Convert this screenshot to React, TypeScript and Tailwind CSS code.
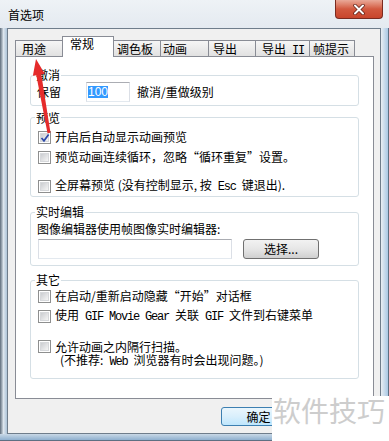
import React from 'react';

const cjk = "font-['Noto_Sans_CJK_SC',sans-serif]";
const mono = "font-['Liberation_Mono',monospace] text-[12px] tracking-[-1.2px]";

function CheckBox({ checked }: { checked?: boolean }) {
  return (
    <span className="w-[13px] h-[13px] shrink-0 border border-[#8e8f8f] bg-white p-[1px] flex relative">
      <span className="flex-1 bg-gradient-to-br from-[#cbcdd1] to-[#f5f5f5] border border-[#d6d8db]" />
      {checked && (
        <svg className="absolute left-[1px] top-[1px]" width="10" height="10" viewBox="0 0 10 10">
          <path d="M1.5 5 L4 7.8 L8.6 1.6" fill="none" stroke="#2b48a8" strokeWidth="1.7" />
        </svg>
      )}
    </span>
  );
}

function CheckRow({ checked, children, className = '' }: { checked?: boolean; children: React.ReactNode; className?: string }) {
  return (
    <div className={`flex items-center gap-[4px] h-[20px] pl-[7px] ${className}`}>
      <CheckBox checked={checked} />
      <span className="leading-[14px] whitespace-nowrap">{children}</span>
    </div>
  );
}

function Group({ title, labelClass, className = '', children }: { title: string; labelClass: string; className?: string; children: React.ReactNode }) {
  return (
    <div className={`border border-[#d5dfe5] rounded-[3px] ${className}`}>
      <div className={`w-fit bg-white ml-[4px] px-[1px] ${labelClass}`}>{title}</div>
      {children}
    </div>
  );
}

const tabs = [
  { label: '用途', w: 'w-[48px]', pl: 'pl-[6px]' },
  { label: '常规', w: 'w-[52px]', pl: 'pl-[7px]', active: true },
  { label: '调色板', w: 'w-[48px]', pl: 'pl-[3px]' },
  { label: '动画', w: 'w-[49px]', pl: 'pl-[2px]' },
  { label: '导出', w: 'w-[48px]', pl: 'pl-[4px]' },
  { label: '导出 II', w: 'w-[55px]', pl: 'pl-[6px]' },
  { label: '帧提示', w: 'w-[46px]', pl: 'pl-[3px]' },
];

export default function App() {
  return (
    <div className={`w-[389px] h-[441px] relative overflow-hidden bg-[#dfe7ef] text-[12px] text-black ${cjk}`}>
      <div className="flex flex-col h-full">
        {/* title bar */}
        <div className="h-[28px] flex items-start bg-gradient-to-b from-[#eef2f6] to-[#e4eaf0]">
          <div className="pl-[8px] pt-[7px] leading-[16px]">首选项</div>
          <div className="ml-auto mr-[6px] w-[48px] h-[19px] rounded-b-[4px] border border-t-0 border-[#7a2b20] bg-gradient-to-b from-[#e9a998] via-[#d2593f] to-[#c8452c] flex items-center justify-center">
            <svg width="12" height="11" viewBox="0 0 12 11">
              <path d="M2 1.5 L10 9.5 M10 1.5 L2 9.5" stroke="#5a1b12" strokeWidth="3.4" strokeLinecap="round" />
              <path d="M2 1.5 L10 9.5 M10 1.5 L2 9.5" stroke="#ffffff" strokeWidth="2" strokeLinecap="round" />
            </svg>
          </div>
        </div>

        <div className="flex flex-1">
          <div className="w-[7px] bg-gradient-to-r from-[#5f6d7b] via-[#dde6ee] to-[#aec4d8]" />
          {/* client */}
          <div className="w-[374px] border border-[#6f7d8b] bg-[#f0f0f0] flex flex-col">
            <div className="ml-[7px] mt-[7px] h-[20px] flex items-end">
              {tabs.map((t, i) => (
                <div
                  key={t.label}
                  className={`${t.w} ${t.pl} ${i > 0 ? '-ml-[1px]' : ''} border-t border-x border-[#898c95] whitespace-nowrap ${
                    t.active ? 'h-[21px] -mb-[1px] relative z-10 bg-white leading-[14px]' : 'h-[16px] pt-[1px] leading-[14px] bg-gradient-to-b from-[#f6f6f6] to-[#e1e1e1]'
                  }`}
                >
                  {t.label === '导出 II' ? (
                    <>
                      导出<span className={mono}> II</span>
                    </>
                  ) : (
                    t.label
                  )}
                </div>
              ))}
            </div>

            {/* panel */}
            <div className="ml-[7px] w-[359px] h-[343px] border border-[#898c95] bg-white flex flex-col px-[14px]">
              <Group title="撤消" labelClass="-mt-[8px] leading-[14px]" className="mt-[18px] pb-[3px]">
                <div className="flex items-center h-[20px] pl-[6px]">
                  <span className="leading-[14px]">保留</span>
                  <div className="ml-[25px] w-[44px] h-[20px] border border-[#abadb3] border-b-[#e3e9ef] border-x-[#dbdfe6] bg-white flex items-center pl-[1px]">
                    <span className="bg-[#3399ff] text-white leading-[12px] font-['Liberation_Sans',sans-serif] text-[12px]">100</span>
                  </div>
                  <span className="ml-[7px] leading-[14px]">撤消/重做级别</span>
                </div>
              </Group>

              <Group title="预览" labelClass="-mt-[7px] leading-[14px]" className="mt-[11px]">
                <CheckRow checked className="mt-[2px]">开启后自动显示动画预览</CheckRow>
                <CheckRow>预览动画连续循环，忽略“循环重复”设置。</CheckRow>
                <CheckRow className="mt-[9px]">
                  全屏幕预览 (没有控制显示, 按<span className={mono}> Esc </span>键退出).
                </CheckRow>
              </Group>

              <Group title="实时编辑" labelClass="-mt-[8px] leading-[14px]" className="mt-[15px] pb-[6px]">
                <div className="mt-[2px] pl-[6px] leading-[16px]">图像编辑器使用帧图像实时编辑器:</div>
                <div className="mt-[2px] pl-[7px] flex items-center">
                  <div className="w-[194px] h-[20px] border border-[#abadb3] border-b-[#e3e9ef] border-x-[#dbdfe6] bg-white" />
                  <button className="ml-[11px] w-[76px] h-[20px] rounded-[3px] border border-[#707070] bg-gradient-to-b from-[#f2f2f2] via-[#e6e6e6] to-[#d0d0d0] leading-[14px] text-center">
                    选择...
                  </button>
                </div>
              </Group>

              <Group title="其它" labelClass="-mt-[7px] leading-[12px]" className="mt-[14px] pb-[12px]">
                <CheckRow>在启动/重新启动隐藏“开始”对话框</CheckRow>
                <CheckRow>
                  使用<span className={mono}> GIF Movie Gear </span>关联<span className={mono}> GIF </span>文件到右键菜单
                </CheckRow>
                <div className="mt-[14px] pl-[7px] flex items-start gap-[4px]">
                  <CheckBox />
                  <div className="whitespace-nowrap">
                    <div className="leading-[13px] h-[13px]">允许动画之内隔行扫描。</div>
                    <div className="leading-[13px] h-[13px] pl-[5px]">
                      (不推荐:<span className={mono}> Web </span>浏览器有时会出现问题。)
                    </div>
                  </div>
                </div>
              </Group>
            </div>

            {/* buttons */}
            <div className="mt-[8px] flex ml-[213px]">
              <button className="w-[75px] h-[19px] rounded-[3px] border border-[#3c7fb1] bg-gradient-to-b from-[#eaf6fd] via-[#d9effc] to-[#bee6fd] leading-[14px] text-center">
                确定
              </button>
            </div>
          </div>
          <div className="w-[8px] bg-gradient-to-r from-[#e9eef3] to-[#a9c8e4] border-r border-[#5d6f82]" />
        </div>
        <div className="h-[7px] bg-gradient-to-b from-[#c9d8e6] to-[#8fb0cf] border-b border-[#5d6f82]" />
      </div>

      {/* red annotation arrow */}
      <svg className="absolute left-[28px] top-[55px]" width="26" height="82" viewBox="0 0 26 82">
        <polygon points="8,4 16.7,18.7 13.3,19.4 22.5,77.7 19.5,78.3 8.3,20.2 4.9,20.8" fill="#e52b2b" />
      </svg>

      {/* watermark */}
      <div className="absolute left-[272px] top-[396px] w-[117px] h-[45px] bg-white">
        <div className="pl-[1px] text-[28px] leading-[28px] text-[#cdcdcd] whitespace-nowrap">软件技巧</div>
      </div>
    </div>
  );
}
